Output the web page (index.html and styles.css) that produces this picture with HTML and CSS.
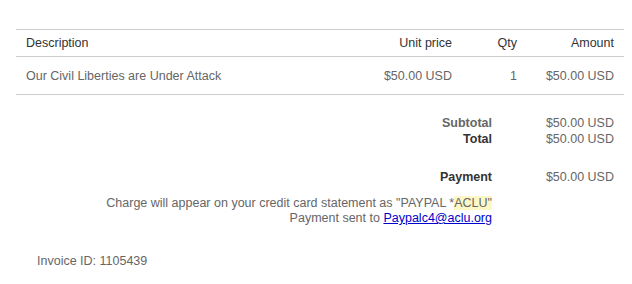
FILE: index.html
```html
<!DOCTYPE html>
<html lang="en">
<head>
    <meta charset="UTF-8">
    <meta name="viewport" content="width=device-width, initial-scale=1.0">
    <title>Invoice</title>
    <link rel="stylesheet" href="styles.css">
</head>
<body>
    <div class="invoice">
        <table class="items">
            <thead>
                <tr>
                    <th class="desc">Description</th>
                    <th class="price">Unit price</th>
                    <th class="qty">Qty</th>
                    <th class="amount">Amount</th>
                </tr>
            </thead>
            <tbody>
                <tr>
                    <td class="desc">Our Civil Liberties are Under Attack</td>
                    <td class="price">$50.00 USD</td>
                    <td class="qty">1</td>
                    <td class="amount">$50.00 USD</td>
                </tr>
            </tbody>
        </table>

        <div class="totals">
            <div class="total-row sub">
                <span class="label">Subtotal</span>
                <span class="value">$50.00 USD</span>
            </div>
            <div class="total-row grand">
                <span class="label">Total</span>
                <span class="value">$50.00 USD</span>
            </div>
            <div class="total-row payment">
                <span class="label">Payment</span>
                <span class="value">$50.00 USD</span>
            </div>
        </div>

        <div class="notes">
            <div>Charge will appear on your credit card statement as "PAYPAL *<span class="mark">ACLU"</span></div>
            <div>Payment sent to <a href="#">Paypalc4@aclu.org</a></div>
        </div>

        <div class="invoice-id">Invoice ID: 1105439</div>
    </div>
</body>
</html>
```

FILE: styles.css
```css
body, html {
    margin: 0;
    padding: 0;
    font-family: 'Liberation Sans', Arial, sans-serif;
    background-color: #fff;
}
.invoice {
    padding: 29px 8px 0 16px;
    font-size: 12.5px;
    color: #666;
}
.items {
    width: 100%;
    border-collapse: collapse;
    border-top: 1px solid #ccc;
}
.items th {
    font-weight: normal;
    color: #333;
    height: 26px;
    padding: 0 10px;
    border-bottom: 1px solid #ccc;
}
.items td {
    height: 37px;
    padding: 0 10px;
    border-bottom: 1px solid #ccc;
}
.items .desc {
    text-align: left;
}
.items .price,
.items .qty,
.items .amount {
    text-align: right;
}
.items .price {
    width: 100px;
}
.items .qty {
    width: 45px;
}
.items .amount {
    width: 77px;
}
.totals {
    margin-top: 20px;
    padding-right: 10px;
}
.total-row {
    display: flex;
    justify-content: flex-end;
    line-height: 16px;
}
.total-row .label {
    font-weight: bold;
    text-align: right;
}
.total-row .value {
    width: 122px;
    text-align: right;
}
.sub .label {
    color: #666;
}
.grand .label,
.payment .label {
    color: #333;
}
.payment {
    margin-top: 22px;
}
.notes {
    margin-top: 11px;
    padding-right: 132px;
    text-align: right;
    line-height: 15px;
}
.notes a {
    color: #00c;
}
.mark {
    background-color: #fdf7c6;
}
.invoice-id {
    margin-top: 28px;
    padding-left: 21px;
}
```
